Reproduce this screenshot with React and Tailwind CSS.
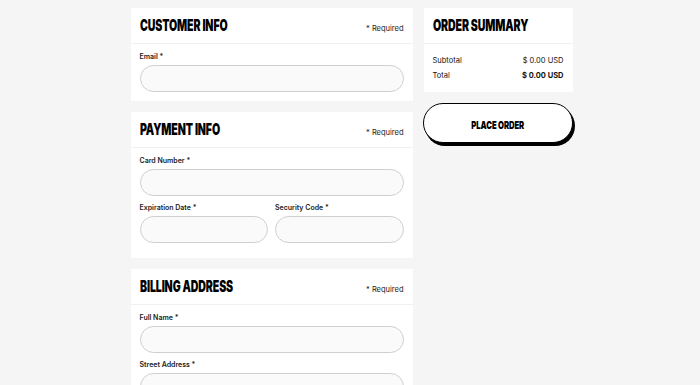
import React from 'react';

const sans = "font-['Inter','Liberation_Sans',sans-serif]";

function Heading({ children, className = '' }) {
    return (
        <h2 className={`inline-block origin-left scale-x-[0.66] text-[16px] leading-none font-black uppercase tracking-[-0.01em] text-black whitespace-nowrap ${className}`}>
            {children}
        </h2>
    );
}

function Field({ label, className = '' }) {
    return (
        <div className={`flex flex-col ${className}`}>
            <label className="text-[7px] font-semibold text-[#222] leading-none mb-[5px]">{label}</label>
            <input className="h-[27px] w-full rounded-full border border-[#cfcfcf] bg-[#fafafa] outline-none" />
        </div>
    );
}

function Section({ title, children, bodyClass = 'pb-[9px]' }) {
    return (
        <section className="bg-white">
            <div className="flex items-center justify-between h-[36px] px-[9px] border-b border-[#f0f0f0]">
                <Heading className="mt-[-1px]">{title}</Heading>
                <span className="text-[7.5px] text-[#222] mt-[6px]">* Required</span>
            </div>
            <div className={`px-[9px] pt-[9px] flex flex-col gap-[8px] ${bodyClass}`}>{children}</div>
        </section>
    );
}

export default function App() {
    return (
        <div className={`h-[385px] overflow-hidden bg-[#f5f5f5] ${sans}`}>
            <div className="flex justify-center gap-[11px] pt-[8px] pl-[3px]">
                <div className="w-[282px] flex flex-col gap-[11px]">
                    <Section title="Customer Info">
                        <Field label="Email *" />
                    </Section>
                    <Section title="Payment Info" bodyClass="pb-[15px]">
                        <Field label="Card Number *" />
                        <div className="grid grid-cols-2 gap-[7px]">
                            <Field label="Expiration Date *" />
                            <Field label="Security Code *" />
                        </div>
                    </Section>
                    <Section title="Billing Address">
                        <Field label="Full Name *" />
                        <Field label="Street Address *" />
                    </Section>
                </div>
                <div className="w-[149px] flex flex-col">
                    <section className="bg-white">
                        <div className="flex items-center h-[36px] px-[9px] border-b border-[#f0f0f0]">
                            <Heading className="mt-[-1px]">Order Summary</Heading>
                        </div>
                        <div className="px-[9px] pt-[13px] pb-[13px] flex flex-col gap-[7px] text-[7.5px] text-[#111] leading-none">
                            <div className="flex justify-between">
                                <span>Subtotal</span>
                                <span>$ 0.00 USD</span>
                            </div>
                            <div className="flex justify-between">
                                <span>Total</span>
                                <span className="font-bold">$ 0.00 USD</span>
                            </div>
                        </div>
                    </section>
                    <button className="mt-[11px] -ml-[1px] w-[150px] h-[40px] rounded-full border border-black bg-white shadow-[2px_3px_0_#000]">
                        <span className="inline-block scale-x-[0.7] text-[11px] font-black uppercase tracking-[-0.01em] text-black">Place Order</span>
                    </button>
                </div>
            </div>
        </div>
    );
}
